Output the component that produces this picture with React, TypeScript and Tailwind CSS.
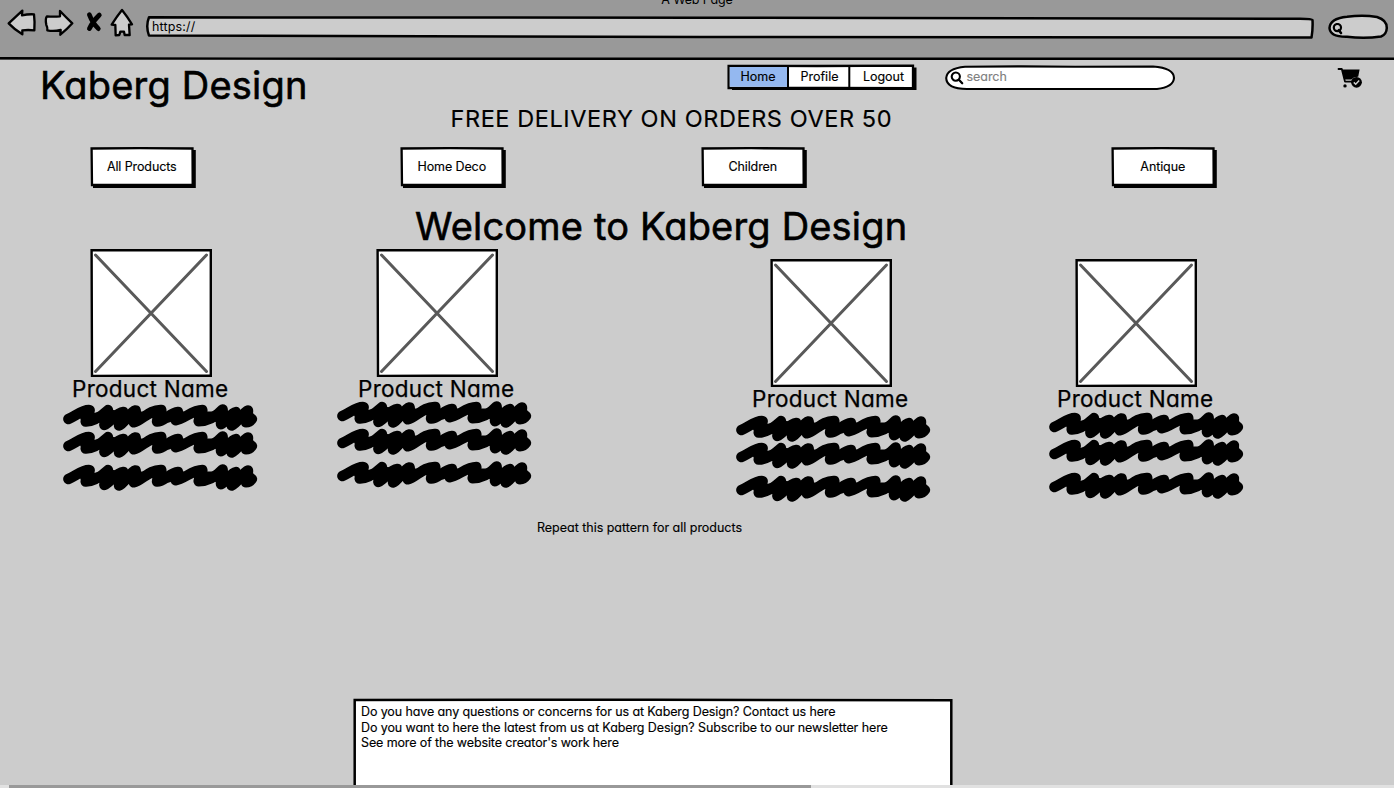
import type { ReactNode } from "react";

const ink = "#000";

function Outline({ viewBox, d, className, fill = "#fff", width = 2.5 }: { viewBox: string; d: string; className: string; fill?: string; width?: number }) {
  return (
    <svg viewBox={viewBox} preserveAspectRatio="none" className={className} fill={fill} stroke={ink} strokeWidth={width} strokeLinejoin="round" strokeLinecap="round" aria-hidden="true">
      <path d={d} />
    </svg>
  );
}

function Magnifier({ className }: { className: string }) {
  return (
    <svg viewBox="0 0 14 14" className={className} fill="none" stroke={ink} strokeLinecap="round">
      <circle cx="5.8" cy="5.6" r="4.1" strokeWidth="2.1" />
      <path d="M8.9 8.8L12.2 12.2" strokeWidth="2.3" />
    </svg>
  );
}

function BrowserBar() {
  return (
    <header className="relative h-[60px] shrink-0 bg-[#999]">
      <div className="absolute inset-x-0 top-[-8.5px] text-center text-[12.5px] leading-4 tracking-[-0.15px]">A Web Page</div>
      <div className="flex pt-2 pl-1.5">
        <Outline viewBox="18 24 96 90" className="h-[30px] w-8" fill="#ccc" width={7} d="M26 70L67 32L66 46Q84 42 102 43Q105 67 103 91Q84 89 67 91L67 103Q44 89 26 70Z" />
        <Outline viewBox="114 24 114 90" className="h-[30px] w-[38px]" fill="#ccc" width={7} d="M141 49Q160 51 180 49L180 33Q198 52 217 70Q200 89 181 104L182 90Q160 95 142 91Q143 82 139 75Q135 55 141 49Z" />
        <svg viewBox="246 24 78 90" className="ml-1.5 h-[30px] w-[26px]" fill="none" stroke={ink} strokeLinecap="round">
          <path d="M268 44Q278 70 295 86M298 45Q278 64 268 86" strokeWidth="14" />
        </svg>
        <Outline viewBox="324 24 81 90" className="h-[30px] w-[27px]" fill="#ccc" width={7} d="M366 30Q382 50 396 73L387 74L389 105L374 105L372 95L361 95L358 105L347 106L346 75L335 74Q350 50 366 30Z" />
        <div className="relative ml-2.5 h-[30px] w-[1169px]">
          <Outline viewBox="145 8 1169 30" className="absolute inset-0 h-[30px] w-[1169px] overflow-visible" fill="#ccc" d="M149 17.3L700 17.7L1300 18.8Q1312 19 1312.5 20Q1313 29 1311.5 37.6L700 37L149 35.6Q145.5 26 149 17.3Z" />
          <span className="relative block pt-[10.5px] pl-[7px] text-[12.5px] leading-4 tracking-[0.15px]">https://</span>
        </div>
        <div className="relative ml-3.5 h-[34px] w-[62px]">
          <Outline viewBox="1328 8 62 34" className="absolute inset-0 h-[34px] w-[62px]" fill="#ccc" d="M1347 16.8Q1363 14.6 1377 17Q1387 20 1386.8 28Q1386.5 34.5 1381 36.5Q1364 39 1347 36.7Q1330 37 1329.5 28Q1330 18.5 1347 16.8Z" />
          <svg viewBox="0 0 12 12" className="relative mt-[15px] ml-1 size-3" fill="none" stroke={ink} strokeLinecap="round">
            <circle cx="5.4" cy="4.6" r="3.6" strokeWidth="2.2" />
            <path d="M6.8 7.2L9 10" strokeWidth="2.6" />
          </svg>
        </div>
      </div>
      <svg viewBox="0 0 1394 4" preserveAspectRatio="none" className="absolute bottom-0 left-0 h-1 w-full" fill="none">
        <path d="M0 2.3L350 2.8L900 2.7L1394 2.7" stroke={ink} strokeWidth="2.4" />
      </svg>
    </header>
  );
}

function Cart() {
  return (
    <svg viewBox="0 0 26 22" className="mt-[7px] ml-[161px] h-[22px] w-[26px]" fill={ink}>
      <path d="M1.5 2H4.8L8 14.6H15" fill="none" stroke={ink} strokeWidth="1.8" strokeLinecap="round" strokeLinejoin="round" />
      <path d="M5 2.5H22.6L21.2 9.8Q16.5 9.6 14.3 12.4L7.1 12.5Z" />
      <circle cx="8" cy="18.9" r="1.7" />
      <circle cx="19.5" cy="15.3" r="5.4" />
      <path d="M16.8 15.4L18.7 17.2L22.2 13.5" fill="none" stroke="#ccc" strokeWidth="1.5" />
    </svg>
  );
}

function Masthead() {
  return (
    <div className="flex h-11 shrink-0 items-start">
      <h1 className="mt-[3px] ml-10 w-[686.5px] text-[38px] leading-[44px] tracking-[0.2px] [-webkit-text-stroke:0.6px_black]">Kaberg Design</h1>
      <nav className="relative mt-1 h-[27px] w-[191px]">
        <svg viewBox="0 0 191 27" className="absolute inset-0 h-[27px] w-[191px]">
          <path d="M5 5L189.5 3.5V26H5Z" fill={ink} />
          <path d="M1.6 1.8L90 2L186 1.6V24.2L100 23.8L1.6 24Z" fill="#fff" stroke={ink} strokeWidth="2.3" />
          <path d="M2.8 3H60V22.8H2.8Z" fill="#94b8f0" />
          <path d="M61 2V24M122.3 2V24" stroke={ink} strokeWidth="2" />
        </svg>
        <ul className="relative flex pt-[5px] pl-px text-[12.5px] leading-4 [-webkit-text-stroke:0.15px_black]">
          <li className="w-[61px] text-center">Home</li>
          <li className="w-[62px] text-center">Profile</li>
          <li className="w-[66px] text-center">Logout</li>
        </ul>
      </nav>
      <div className="relative mt-[5px] ml-[27px] flex h-[26px] w-[231px] items-center">
        <Outline viewBox="0 0 231 26" className="absolute inset-0 h-[26px] w-[231px]" width={2.1} d="M20 1.8Q70 1 130 1.7L208 1.5Q229 3 229 13Q228.5 22 212 24L130 24L22 24Q1.5 24 1.2 13Q2 3.5 20 1.8Z" />
        <Magnifier className="relative ml-[5px] size-3.5" />
        <span className="relative ml-[3px] mb-[3px] text-[12.5px] leading-4 tracking-[-0.05px] text-[#808080] [-webkit-text-stroke:0.15px_#808080]">search</span>
      </div>
      <Cart />
    </div>
  );
}

function CategoryButton({ children }: { children: ReactNode }) {
  return (
    <button type="button" className="relative block h-[41px] w-[106px] text-[12.5px] leading-4 tracking-[-0.1px] [-webkit-text-stroke:0.15px_black]">
      <svg viewBox="0 0 106 41" className="absolute inset-0 h-[41px] w-[106px]">
        <path d="M3 3H105.8V41H3Z" fill={ink} />
        <path d="M1.6 1.5L50 1.2L102.5 1.5L102.7 38L50 37.8L2 38Z" fill="#fff" stroke={ink} strokeWidth="2.3" />
      </svg>
      <span className="relative block pr-[2.5px] pb-[2px]">{children}</span>
    </button>
  );
}

function Scribble({ className }: { className: string }) {
  return (
    <svg viewBox="0 0 615 90" className={className} fill="none" stroke={ink} strokeWidth="31" strokeLinecap="round" strokeLinejoin="round">
      <path d="M25 57C45 50 68 27 89 30C92 40 75 54 77 65C98 66 122 50 144 30C145 44 131 62 133 75C150 68 168 38 190 36C194 46 175 64 177 77C193 72 208 36 227 31C230 46 219 58 221 67C246 62 268 28 304 30C307 42 289 54 291 65C312 66 330 38 354 36C356 46 344 54 347 61C372 58 396 30 427 30C430 42 413 54 416 64C446 64 468 50 488 28C491 44 480 60 483 73C499 66 512 38 527 36C530 48 513 64 515 77C532 71 548 36 564 31C566 46 556 58 558 67C566 67 572 63 576 57" />
      <path d="M135 60L160 46L188 66L210 48L232 45M222 62L245 50M345 52L362 48M478 55L500 50L520 64L545 48L568 50M98 55L128 50M300 50L325 52M425 50L465 50M75 50L85 45" />
    </svg>
  );
}

function Product({ card, image, lines }: { card: string; image: string; lines: string }) {
  return (
    <article className={card}>
      <div className={image}>
        <svg viewBox="0 0 122 128" className="block h-32 w-[122px]">
          <path d="M1.6 1.3L60 1.3L120.8 1.2L120.8 126.8L60 126.7L2 127Z" fill="#fff" stroke={ink} strokeWidth="2.4" />
          <path d="M5.5 6L116.5 122.5M116.5 6L5.500 122.5" stroke="#595959" strokeWidth="3" strokeLinecap="round" />
        </svg>
        <h3 className="-ml-[18px] h-[18px] w-44 pt-px text-[22.5px] leading-[22px] tracking-[0.27px] whitespace-nowrap [-webkit-text-stroke:0.25px_black]">Product Name</h3>
      </div>
      <div className={lines}>
        <Scribble className="block h-[30px] w-[205px] overflow-visible" />
        <Scribble className="-mt-[3px] block h-[30px] w-[205px] overflow-visible" />
        <Scribble className="mt-[3px] block h-[30px] w-[205px] overflow-visible" />
      </div>
    </article>
  );
}

export default function App() {
  return (
    <div className="flex h-[788px] w-[1394px] flex-col overflow-hidden bg-[#ccc] font-['Inter','Liberation_Sans',sans-serif] text-black [font-feature-settings:'cv11']">
      <BrowserBar />
      <Masthead />
      <p className="ml-[450.5px] h-[43px] shrink-0 pt-px text-[23.5px] leading-7 tracking-[0.58px] whitespace-nowrap [-webkit-text-stroke:0.15px_black]">FREE DELIVERY ON ORDERS OVER 50</p>
      <div className="ml-[90px] grid h-[57px] shrink-0 grid-cols-[310px_301px_410px_106px]">
        <CategoryButton>All Products</CategoryButton>
        <CategoryButton>Home Deco</CategoryButton>
        <CategoryButton>Children</CategoryButton>
        <CategoryButton>Antique</CategoryButton>
      </div>
      <h2 className="ml-[415px] h-[45px] shrink-0 text-[38px] leading-[44px] tracking-[0.18px] whitespace-nowrap [-webkit-text-stroke:0.6px_black]">Welcome to Kaberg Design</h2>
      <main className="ml-[60px] grid h-[270px] shrink-0 grid-cols-[274px_399px_313px_205px]">
        <Product card="" image="ml-[30px]" lines="mt-[5px]" />
        <Product card="" image="ml-[42px]" lines="mt-[2px]" />
        <Product card="pt-2.5" image="ml-[37px]" lines="mt-[5.5px]" />
        <Product card="pt-2.5" image="ml-[29px]" lines="mt-[3px]" />
      </main>
      <p className="ml-[537px] h-[179px] shrink-0 pt-[0.5px] text-[12.5px] leading-4 tracking-[-0.02px] [-webkit-text-stroke:0.15px_black]">Repeat this pattern for all products</p>
      <footer className="relative ml-[353px] h-[87px] w-[600px] shrink-0 overflow-hidden">
        <svg viewBox="0 0 600 87" className="absolute inset-0 h-[87px] w-[600px]">
          <path d="M1.7 95V2L300 1.7L598.3 2.2V95" fill="#fff" stroke={ink} strokeWidth="2.5" />
        </svg>
        <div className="relative pt-1.5 pl-2 text-[12.5px] leading-[15.6px] whitespace-nowrap [-webkit-text-stroke:0.15px_black]">
          <p className="tracking-[-0.11px]">Do you have any questions or concerns for us at Kaberg Design? Contact us here</p>
          <p className="tracking-[-0.09px]">Do you want to here the latest from us at Kaberg Design? Subscribe to our newsletter here</p>
          <p className="tracking-[-0.12px]">See more of the website creator's work here</p>
        </div>
      </footer>
      <div className="h-[3px] shrink-0 bg-[#e1e1e1]">
        <div className="ml-[9px] h-[3px] w-[802px] bg-[#999]" />
      </div>
    </div>
  );
}
